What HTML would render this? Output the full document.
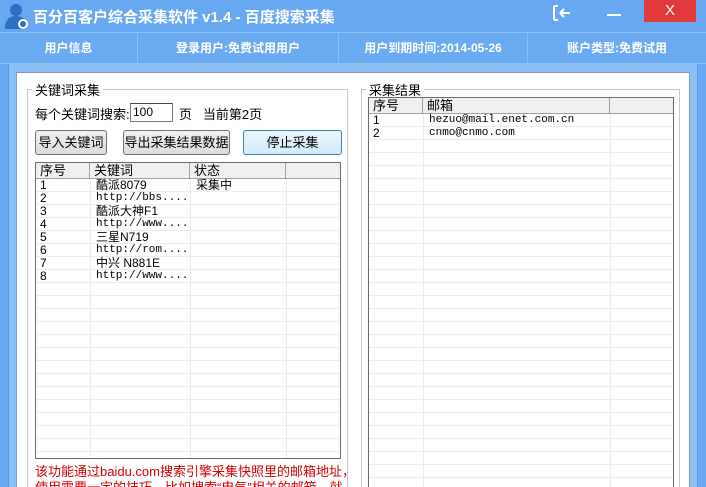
<!DOCTYPE html>
<html><head><meta charset="utf-8"><style>
*{margin:0;padding:0;box-sizing:border-box}
html,body{width:706px;height:487px;overflow:hidden}
body{background:#68a8f0;font-family:"Liberation Sans","Noto Sans CJK SC","WenQuanYi Zen Hei",sans-serif;font-size:12px;position:relative;color:#000}
.a{position:absolute}
.title{left:0;top:0;width:706px;height:33px;background:#68a8f0;border-bottom:1px solid #8ec0f6}
.tt{left:33px;top:6px;color:#fff;font-weight:bold;font-size:15px;white-space:nowrap}
.tabs{left:0;top:33px;width:706px;height:31px;background:#6aaaf1;border-bottom:1px solid #8ec0f6}
.tab{top:0;height:31px;line-height:31px;color:#fff;font-weight:bold;font-size:12px;text-align:center;border-right:1px solid #8ec0f6}
.frame{left:8px;top:64px;width:690px;height:440px;background:#8cc0f6;border-left:1px solid #5c9ae0;border-right:1px solid #5c9ae0}
.white{left:16px;top:72px;width:674px;height:440px;background:#fff;border:1px solid #7a9cc0}
.gb{border:1px solid #c8c8c8}
.gl{background:#fff;padding:0 3px;font-size:13px}
.lv{background:#fff;border:1px solid #6b6b6b;overflow:hidden}
.hd{height:16px;background:#f0f0f0;border-bottom:1px solid #a0a0a0;position:relative}
.hd span{position:absolute;top:0;height:16px;line-height:15px;font-size:13px;padding-left:4px;border-right:1px solid #a0a0a0}
.row{height:13px;border-bottom:1px solid #ececec;position:relative;font-size:12px;line-height:12px}
.row span{position:absolute;top:0;padding-left:4px}
.vl{position:absolute;top:16px;bottom:0;width:1px;background:#eaeaea}
.btn{height:25px;border:1px solid #707070;border-radius:3px;background:linear-gradient(#f2f2f2,#dcdcdc);text-align:center;line-height:23px;font-size:13px}
.mono{font-family:"Liberation Mono","Noto Sans CJK SC",monospace;font-size:11px}
</style></head><body>
<div class="a title"></div>
<svg class="a" style="left:4px;top:2px" width="26" height="28" viewBox="0 0 26 28"><circle cx="12" cy="8" r="6" fill="#2b6fc6"/><path d="M1 27 C1 17 6 14 12 14 C18 14 22 17 22 22 L22 27Z" fill="#2b6fc6"/><circle cx="19" cy="22" r="5" fill="#fff"/><circle cx="19" cy="22" r="3" fill="#2b6fc6"/></svg>
<div class="a tt">百分百客户综合采集软件 v1.4 - 百度搜索采集</div>
<svg class="a" style="left:552px;top:5px" width="20" height="16" viewBox="0 0 20 16"><path d="M2 1H6M2 1V15M2 15H6M8 8H18M8 8L12 4M8 8L12 12" stroke="#fff" stroke-width="2" fill="none"/></svg>
<div class="a" style="left:607px;top:14px;width:14px;height:2px;background:#fff"></div>
<div class="a" style="left:644px;top:0;width:52px;height:22px;background:#e23a3a;color:#fff;text-align:center;line-height:22px;font-size:15px">X</div>
<div class="a tabs">
<div class="a tab" style="left:0;width:138px">用户信息</div>
<div class="a tab" style="left:138px;width:201px">登录用户:免费试用用户</div>
<div class="a tab" style="left:339px;width:189px">用户到期时间:2014-05-26</div>
<div class="a tab" style="left:528px;width:178px;border-right:none">账户类型:免费试用</div>
</div>
<div class="a frame"></div>
<div class="a white"></div>
<div class="a gb" style="left:27px;top:89px;width:321px;height:410px"></div>
<div class="a gl" style="left:32px;top:80px">关键词采集</div>
<div class="a" style="left:35px;top:104px;font-size:13px">每个关键词搜索:</div>
<div class="a" style="left:130px;top:103px;width:43px;height:19px;border:1px solid #7a7a7a;border-top-color:#444;background:#fff;font-size:12px;line-height:17px;padding-left:2px">100</div>
<div class="a" style="left:179px;top:104px;font-size:13px">页&nbsp;&nbsp;&nbsp;当前第2页</div>
<div class="a btn" style="left:35px;top:130px;width:72px">导入关键词</div>
<div class="a btn" style="left:123px;top:130px;width:107px">导出采集结果数据</div>
<div class="a btn" style="left:243px;top:130px;width:99px;border-color:#3c7fb1;background:linear-gradient(#eaf6fd,#d3eaf9)">停止采集</div>
<div class="a lv" style="left:35px;top:162px;width:306px;height:297px">
<div class="hd"><span style="left:0;width:54px">序号</span><span style="left:54px;width:100px">关键词</span><span style="left:154px;width:96px">状态</span></div>
<div class="vl" style="left:54px"></div><div class="vl" style="left:154px"></div><div class="vl" style="left:250px"></div>
<div class="row"><span>1</span><span style="left:56px">酷派8079</span><span style="left:156px">采集中</span></div>
<div class="row"><span>2</span><span class="mono" style="left:56px">http://bbs....</span></div>
<div class="row"><span>3</span><span style="left:56px">酷派大神F1</span></div>
<div class="row"><span>4</span><span class="mono" style="left:56px">http://www....</span></div>
<div class="row"><span>5</span><span style="left:56px">三星N719</span></div>
<div class="row"><span>6</span><span class="mono" style="left:56px">http://rom....</span></div>
<div class="row"><span>7</span><span style="left:56px">中兴 N881E</span></div>
<div class="row"><span>8</span><span class="mono" style="left:56px">http://www....</span></div>
<div class="row"></div><div class="row"></div><div class="row"></div><div class="row"></div><div class="row"></div><div class="row"></div><div class="row"></div><div class="row"></div><div class="row"></div><div class="row"></div><div class="row"></div><div class="row"></div><div class="row"></div><div class="row"></div>
</div>
<div class="a" style="left:35px;top:464px;color:#d40000;font-size:13px;line-height:16px;white-space:nowrap">该功能通过baidu.com搜索引擎采集快照里的邮箱地址，<br>使用需要一定的技巧，比如搜索“电气”相关的邮箱，就</div>
<div class="a gb" style="left:361px;top:89px;width:319px;height:410px"></div>
<div class="a gl" style="left:366px;top:80px">采集结果</div>
<div class="a lv" style="left:368px;top:97px;width:306px;height:400px">
<div class="hd"><span style="left:0;width:54px">序号</span><span style="left:54px;width:187px">邮箱</span></div>
<div class="vl" style="left:54px"></div><div class="vl" style="left:241px"></div>
<div class="row"><span>1</span><span class="mono" style="left:56px">hezuo@mail.enet.com.cn</span></div>
<div class="row"><span>2</span><span class="mono" style="left:56px">cnmo@cnmo.com</span></div>
<div class="row"></div><div class="row"></div><div class="row"></div><div class="row"></div><div class="row"></div><div class="row"></div><div class="row"></div><div class="row"></div><div class="row"></div><div class="row"></div><div class="row"></div><div class="row"></div><div class="row"></div><div class="row"></div><div class="row"></div><div class="row"></div><div class="row"></div><div class="row"></div><div class="row"></div><div class="row"></div><div class="row"></div><div class="row"></div><div class="row"></div><div class="row"></div><div class="row"></div><div class="row"></div>
</div>
</body></html>
